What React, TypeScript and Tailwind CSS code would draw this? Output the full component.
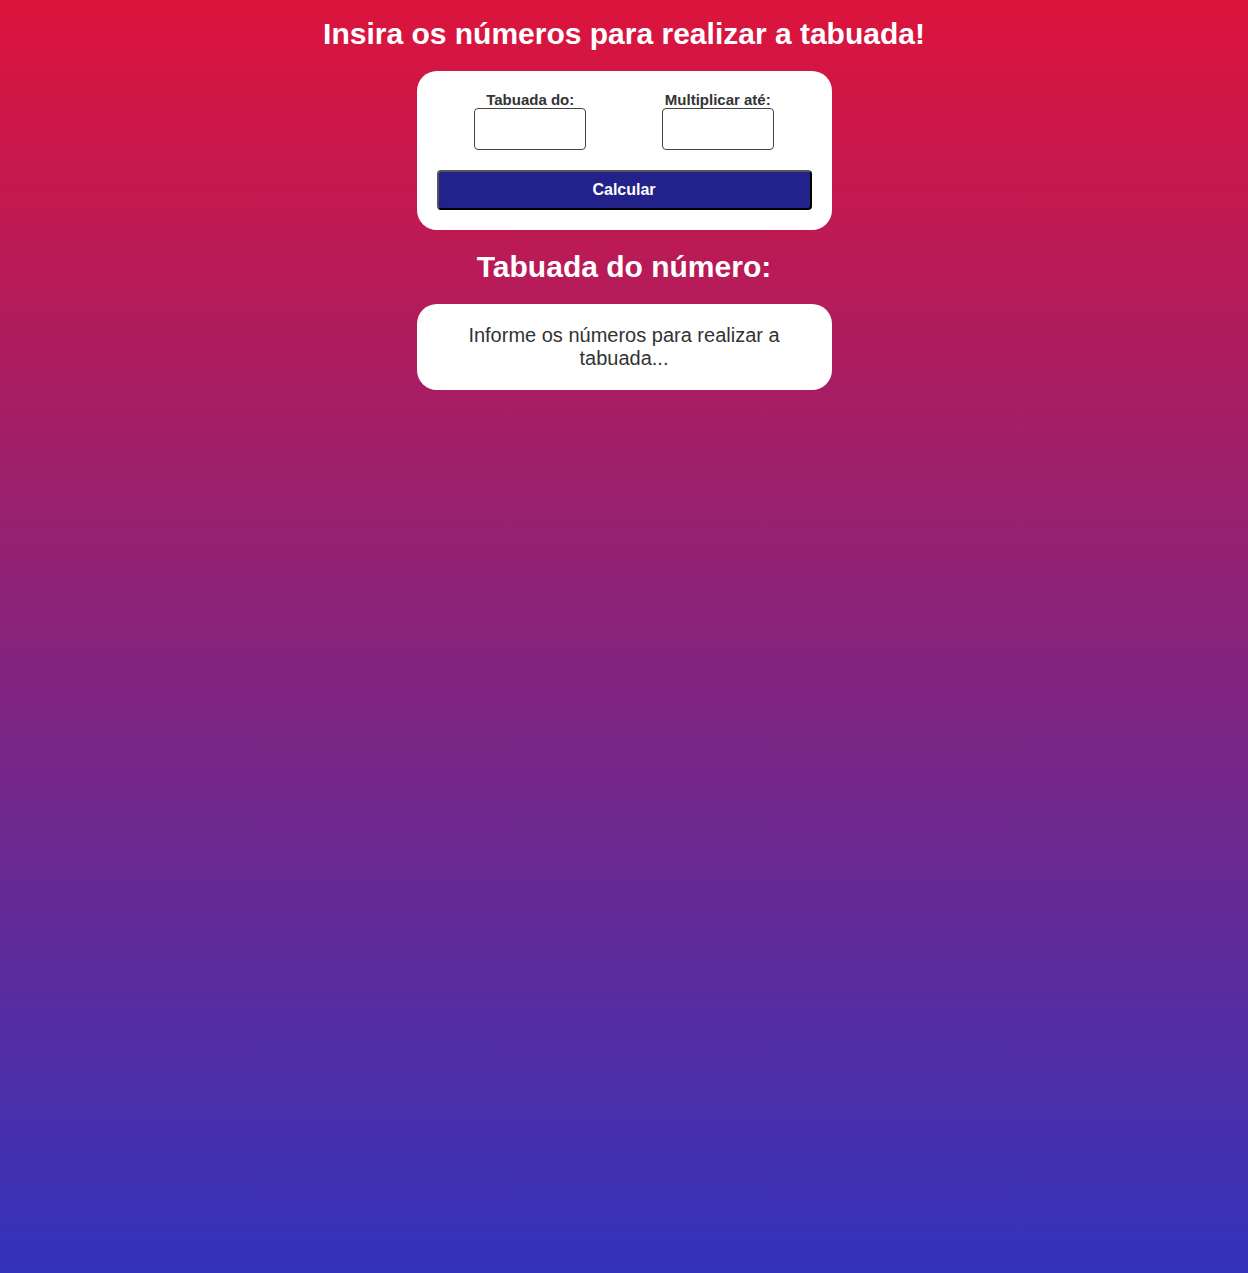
export default function App() {
  return (
    <div className="min-h-[1273px] bg-[linear-gradient(to_bottom,#dc143c,#3333bb)] font-['Liberation_Sans',Arial,sans-serif] flex flex-col items-center pt-[15px]">
      <h1 className="text-[30px] font-bold text-white leading-[38px]">
        Insira os números para realizar a tabuada!
      </h1>

      <div className="mt-[18px] w-[415px] rounded-[20px] bg-white p-5">
        <div className="flex justify-around">
          <div className="flex flex-col items-center">
            <label className="text-[15px] font-bold leading-[17px] text-[#333]">Tabuada do:</label>
            <input type="number" className="h-[42px] w-[112px] rounded-[4px] border border-[#444] outline-none" />
          </div>
          <div className="flex flex-col items-center">
            <label className="text-[15px] font-bold leading-[17px] text-[#333]">Multiplicar até:</label>
            <input type="number" className="h-[42px] w-[112px] rounded-[4px] border border-[#444] outline-none" />
          </div>
        </div>
        <button className="mt-5 h-10 w-full rounded-[4px] border-2 border-t-[#555] border-l-[#555] border-r-black border-b-black bg-[#22228a] text-[16px] font-bold text-white">
          Calcular
        </button>
      </div>

      <h2 className="mt-[18px] text-[30px] font-bold leading-[38px] text-white">Tabuada do número:</h2>

      <div className="mt-[18px] w-[415px] rounded-[20px] bg-white px-5 py-5 text-center text-[20px] leading-[23px] text-[#333]">
        Informe os números para realizar a tabuada...
      </div>
    </div>
  );
}
